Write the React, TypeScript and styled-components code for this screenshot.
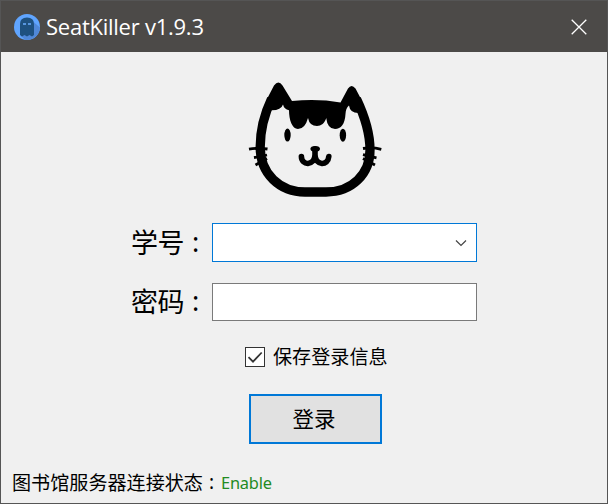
import React, { useState } from "react";
import styled, { createGlobalStyle } from "styled-components";

const GlobalStyle = createGlobalStyle`
  * { box-sizing: border-box; }
  html, body { margin: 0; padding: 0; overflow: hidden; }
  body { font-family: "Noto Sans", "Noto Sans CJK SC", sans-serif; color: #000; }
  input, button { font: inherit; color: inherit; margin: 0; border-radius: 0; outline: none; }
`;

const Window = styled.main`
  width: 608px;
  height: 504px;
  display: flex;
  flex-direction: column;
  background: #f0f0f0;
  border: 1px solid #555;
`;

const TitleBar = styled.header`
  height: 51px;
  flex: none;
  display: flex;
  align-items: center;
  padding: 0 20px 0 13px;
  background: #4c4a48;
  color: #fff;
`;

const AppIcon = styled.svg`
  width: 26px;
  height: 26px;
  flex: none;
`;

const Title = styled.h1`
  margin: 0 auto 0 6px;
  padding-bottom: 2px;
  font: 400 22px/30px "Open Sans", sans-serif;
  letter-spacing: -0.25px;
  white-space: nowrap;
`;

const CloseButton = styled.button`
  display: flex;
  padding: 0;
  border: 0;
  background: none;
`;

const Body = styled.section`
  flex: 1;
  display: flex;
  flex-direction: column;
  align-items: center;
`;

const Cat = styled.svg`
  width: 150px;
  height: 125px;
  margin: 23px 0 0 22px;
  flex: none;
`;

const Form = styled.form`
  width: 345px;
  display: flex;
  flex-direction: column;
  margin: 23px 0 0 1px;
`;

const Field = styled.label<{ $gap?: number }>`
  display: flex;
  align-items: center;
  margin-bottom: ${(p) => p.$gap ?? 0}px;
`;

const FieldLabel = styled.span`
  width: 81px;
  flex: none;
  display: flex;
  margin-left: -1px;
  font-size: 27px;
  line-height: 38px;
  letter-spacing: -0.5px;
  white-space: nowrap;
`;

const Colon = styled.span<{ $size: number; $left: number }>`
  font-family: "Noto Sans", sans-serif;
  font-size: ${(p) => p.$size}px;
  margin: -1px 0 1px ${(p) => p.$left}px;
`;

const Box = styled.span<{ $active?: boolean }>`
  width: 265px;
  height: ${(p) => (p.$active ? 39 : 38)}px;
  display: flex;
  align-items: center;
  padding-right: 9px;
  background: #fff;
  border: 1px solid ${(p) => (p.$active ? "#0078d7" : "#7a7a7a")};
`;

const Input = styled.input`
  flex: 1;
  min-width: 0;
  height: 100%;
  padding: 0 6px;
  border: 0;
  background: transparent;
  font-size: 22px;
`;

const Remember = styled.label`
  display: flex;
  align-items: center;
  align-self: flex-start;
  gap: 8px;
  height: 26px;
  margin: 23px 0 0 113px;
  font-size: 19.1px;
  line-height: 26px;
  white-space: nowrap;
`;

const CheckBox = styled.button`
  width: 20px;
  height: 20px;
  display: flex;
  padding: 0;
  background: #fff;
  border: 1px solid #333;
`;

const LoginButton = styled.button`
  width: 133px;
  height: 50px;
  margin: 24px 0 0 117px;
  padding: 0 3px 1px 0;
  font-size: 21.5px;
  line-height: 30px;
  background: #e1e1e1;
  border: 2px solid #0078d7;
`;

const StatusBar = styled.footer`
  height: 42px;
  flex: none;
  display: flex;
  align-items: center;
  padding: 2px 0 0 11px;
  font-size: 19.1px;
  line-height: 28px;
  white-space: nowrap;
`;

const Status = styled.span`
  margin-left: 7px;
  color: #228b22;
  font: 400 16.4px/28px "Noto Sans", sans-serif;
  letter-spacing: -0.2px;
`;

const CatLogo = () => (
  <Cat viewBox="240 75 150 125" aria-label="cat">
    <path
      d="M271.5 99C262 119 260.2 137 260.2 147C260.2 174 280 192 305 192H326C352 192 370 174 370 150C370 137 366 119 356.5 99"
      fill="none"
      stroke="#000"
      strokeWidth="9.3"
    />
    <path d="M274 85.5Q278.5 79.5 282.5 85.5L292 101Q318 98.5 340.5 102.5L348 88.5Q351.5 83.5 355.5 88.5L360.5 98L363 113H358.3Q350 113 349 105.5Q345.7 108 345.5 114C345 124 341 129 335 129Q327.5 129 326.2 118C325 123 321 126 317 126Q309.5 126 308 118Q305 129 298 129C292 129 289 120 289 110.3Q284 109 283 104.5Q281 110.5 271.3 110.3L266 109L267.5 98Z" />
    <ellipse cx="287.5" cy="135.1" rx="3.2" ry="6.5" />
    <ellipse cx="342.9" cy="135.2" rx="3.2" ry="6.5" />
    <path
      d="M301.4 156.5C301.5 166 314.5 166 315 155V149M328.8 156.5C328 166 315.5 166 315 155"
      fill="none"
      stroke="#000"
      strokeWidth="5.6"
      strokeLinecap="round"
    />
    <ellipse cx="315.2" cy="148.8" rx="4.8" ry="2.9" />
    <path
      d="M249 149.2Q258 147.5 267.5 149M254 157.7L267 155M255.5 165L267 158.5M363 148.5Q372 147 381.3 149.3M363 154.7L376.5 157.8M363 158.5L375 165"
      fill="none"
      stroke="#000"
      strokeWidth="2.8"
    />
  </Cat>
);

export default function App() {
  const [saved, setSaved] = useState(true);
  return (
    <>
      <GlobalStyle />
      <Window>
        <TitleBar>
          <AppIcon viewBox="0 0 26 26">
            <circle cx="13" cy="13" r="13" fill="#60a5ff" />
            <path d="M19.5 8L26 13.5A13 13 0 0 1 11 25.8L7 22Z" fill="#5088d8" />
            <path d="M6 21V10Q6 3.5 13 3.5T20 10V21L18 22.5L15.5 21L13 22.5L10.5 21L8 22.5Z" fill="#1e5180" />
            <path d="M9 9h3v2H9zM14 9h3v2h-3z" fill="#5796df" />
          </AppIcon>
          <Title>SeatKiller v1.9.3</Title>
          <CloseButton aria-label="Close">
            <svg width="16" height="16" viewBox="0 0 16 16">
              <path d="M.7.7 15.3 15.3M15.3.7.7 15.3" stroke="#fff" strokeWidth="1.3" />
            </svg>
          </CloseButton>
        </TitleBar>
        <Body>
          <CatLogo />
          <Form onSubmit={(e) => e.preventDefault()}>
            <Field $gap={21}>
              <FieldLabel>学号<Colon $size={27} $left={8}>:</Colon></FieldLabel>
              <Box $active>
                <Input aria-label="学号" />
                <svg width="12" height="8" viewBox="0 0 12 8">
                  <path d="M1 1.5 6 6.5 11 1.5" fill="none" stroke="#444" strokeWidth="1.2" />
                </svg>
              </Box>
            </Field>
            <Field>
              <FieldLabel>密码<Colon $size={27} $left={8}>:</Colon></FieldLabel>
              <Box>
                <Input type="password" aria-label="密码" />
              </Box>
            </Field>
            <Remember>
              <CheckBox type="button" role="checkbox" aria-checked={saved} onClick={() => setSaved(!saved)}>
                {saved && (
                  <svg width="18" height="18" viewBox="0 0 18 18">
                    <path d="M2.5 9.2 7 13.7 15.7 4.5" fill="none" stroke="#333" strokeWidth="1.8" />
                  </svg>
                )}
              </CheckBox>
              保存登录信息
            </Remember>
            <LoginButton type="submit">登录</LoginButton>
          </Form>
        </Body>
        <StatusBar>
          图书馆服务器连接状态
          <Colon $size={19} $left={6}>:</Colon>
          <Status>Enable</Status>
        </StatusBar>
      </Window>
    </>
  );
}
